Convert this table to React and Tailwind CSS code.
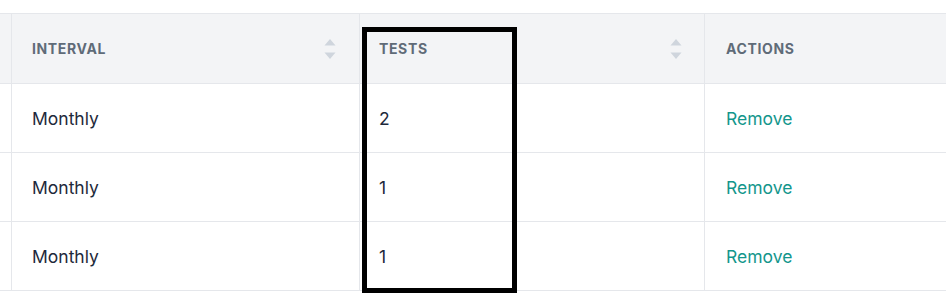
import React from "react";

function SortIcon() {
  return (
    <svg width="12" height="22" viewBox="0 0 12 22" className="shrink-0">
      <path d="M6 1 L11.5 7.5 L0.5 7.5 Z" fill="#cfd5dd" />
      <path d="M6 21 L11.5 14.5 L0.5 14.5 Z" fill="#cfd5dd" />
    </svg>
  );
}

const rows = [
  { interval: "Monthly", tests: "2" },
  { interval: "Monthly", tests: "1" },
  { interval: "Monthly", tests: "1" },
];

export default function App() {
  return (
    <div
      className="relative w-[946px] h-[307px] bg-white overflow-hidden"
      style={{ fontFamily: "Inter, 'Noto Sans', sans-serif" }}
    >
      <div className="pt-[13px]">
        <div className="grid grid-cols-[11px_348px_345px_1fr] border-t border-[#e5e7eb]">
          <div className="h-[70px] bg-[#f3f4f6] border-b border-[#e5e7eb]" />
          <div className="h-[70px] bg-[#f3f4f6] border-b border-l border-[#e5e7eb] flex items-center justify-between pl-[20px] pr-[23px]">
            <span className="text-[14px] font-bold tracking-[0.045em] text-[#5f6b78]">INTERVAL</span>
            <SortIcon />
          </div>
          <div className="h-[70px] bg-[#f3f4f6] border-b border-l border-[#e5e7eb] flex items-center justify-between pl-[19px] pr-[22px]">
            <span className="text-[14px] font-bold tracking-[0.045em] text-[#5f6b78]">TESTS</span>
            <SortIcon />
          </div>
          <div className="h-[70px] bg-[#f3f4f6] border-b border-l border-[#e5e7eb] flex items-center pl-[21px]">
            <span className="text-[14px] font-bold tracking-[0.045em] text-[#5f6b78]">ACTIONS</span>
          </div>
          {rows.map((r, i) => (
            <React.Fragment key={i}>
              <div className="h-[69px] border-b border-[#e5e7eb]" />
              <div className="h-[69px] border-b border-l border-[#e5e7eb] flex items-center pl-[20px] pt-[2px] text-[17.5px] text-[#1e293b]">
                {r.interval}
              </div>
              <div className="h-[69px] border-b border-l border-[#e5e7eb] flex items-center pl-[19px] pt-[2px] text-[17.5px] text-[#1e293b]">
                {r.tests}
              </div>
              <div className="h-[69px] border-b border-l border-[#e5e7eb] flex items-center pl-[21px] pt-[2px] text-[17.5px] text-[#13968c]">
                Remove
              </div>
            </React.Fragment>
          ))}
        </div>
      </div>
      <div className="absolute left-[362px] top-[27px] w-[155px] h-[266px] border-[5px] border-black" />
    </div>
  );
}
